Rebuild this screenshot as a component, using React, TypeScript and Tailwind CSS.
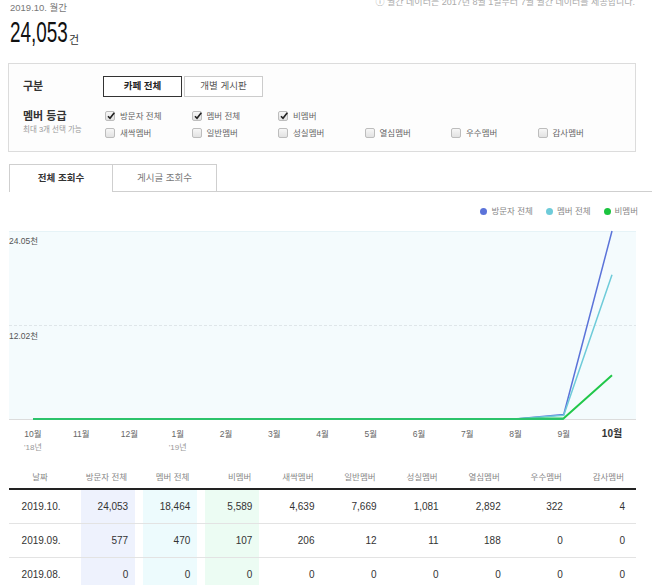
import React from 'react'

const FONT = { fontFamily: '"Liberation Sans", "Noto Sans CJK KR", sans-serif' }

const GRADES: { label: string; checked: boolean }[] = [
  { label: '방문자 전체', checked: true },
  { label: '멤버 전체', checked: true },
  { label: '비멤버', checked: true },
  { label: '', checked: false },
  { label: '', checked: false },
  { label: '', checked: false },
  { label: '새싹멤버', checked: false },
  { label: '일반멤버', checked: false },
  { label: '성실멤버', checked: false },
  { label: '열심멤버', checked: false },
  { label: '우수멤버', checked: false },
  { label: '감사멤버', checked: false },
]

const HEADERS = ['방문자 전체', '멤버 전체', '비멤버', '새싹멤버', '일반멤버', '성실멤버', '열심멤버', '우수멤버', '감사멤버']

const ROWS = [
  { date: '2019.10.', values: ['24,053', '18,464', '5,589', '4,639', '7,669', '1,081', '2,892', '322', '4'] },
  { date: '2019.09.', values: ['577', '470', '107', '206', '12', '11', '188', '0', '0'] },
  { date: '2019.08.', values: ['0', '0', '0', '0', '0', '0', '0', '0', '0'] },
]

const BANDS = ['bg-[#eef2fd]', 'bg-[#edfbfd]', 'bg-[#ecfcf3]']

const MONTHS = ['10월', '11월', '12월', '1월', '2월', '3월', '4월', '5월', '6월', '7월', '8월', '9월', '10월']

const SERIES = [
  { color: '#5b73d9', last: [577, 24053] },
  { color: '#6ecbd9', last: [470, 18464] },
  { color: '#21c74a', last: [107, 5589] },
]

function px(i: number) {
  return 24 + i * 48.25
}
function py(v: number) {
  return 194 - (v / 24053) * 188
}

function Checkbox({ checked }: { checked: boolean }) {
  return (
    <span className="relative inline-block w-[10px] h-[10px] border border-[#bdbdbd] rounded-[2px] bg-gradient-to-b from-[#f7f7f7] to-[#e2e2e2] shrink-0">
      {checked && (
        <svg viewBox="0 0 10 10" className="absolute left-[0px] top-[-1px] w-[10px] h-[10px]">
          <path d="M2 5.2 L4 7.3 L8.3 1.8" fill="none" stroke="#222" strokeWidth="1.6" />
        </svg>
      )}
    </span>
  )
}

function Chart() {
  const basePts = Array.from({ length: 12 }, (_, i) => `${px(i)},194`)
  return (
    <svg width="627" height="230" className="block">
      <rect x="0" y="6" width="627" height="188" fill="#f4fbfd" />
      <line x1="0" y1="6.5" x2="627" y2="6.5" stroke="#e6f3f7" />
      <line x1="0" y1="100.5" x2="627" y2="100.5" stroke="#dfe6e9" strokeDasharray="3 2" />
      <line x1="0" y1="194.5" x2="627" y2="194.5" stroke="#dcdcdc" />
      <text x="0" y="19" fontSize="8.5" fill="#555">24.05천</text>
      <text x="0" y="114" fontSize="8.5" fill="#555">12.02천</text>
      {SERIES.map((s, idx) => (
        <polyline
          key={idx}
          fill="none"
          stroke={s.color}
          strokeWidth={idx === 2 ? 2 : 1.5}
          points={[...basePts.slice(0, 11), `${px(11)},${py(s.last[0])}`, `${px(12)},${py(s.last[1])}`].join(' ')}
        />
      ))}
      <polyline fill="none" stroke="#2cc36b" strokeWidth="2" points={basePts.slice(0, 12).join(' ')} />
      {MONTHS.map((m, i) => (
        <text
          key={i}
          x={px(i)}
          y="212"
          fontSize={i === 12 ? 10 : 8.5}
          fontWeight={i === 12 ? 700 : 400}
          fill={i === 12 ? '#333' : '#666'}
          textAnchor="middle"
        >
          {m}
        </text>
      ))}
      <text x={px(0)} y="225" fontSize="8" fill="#999" textAnchor="middle">'18년</text>
      <text x={px(3)} y="225" fontSize="8" fill="#999" textAnchor="middle">'19년</text>
    </svg>
  )
}

export default function App() {
  return (
    <div className="w-[652px] h-[585px] overflow-hidden bg-white text-[#333]" style={FONT}>
      <div className="relative h-[63px] px-[10px]">
        <div className="absolute right-[17px] top-[-4px] text-[9px] text-[#aaa] leading-[12px]">
          ⓘ 월간 데이터는 2017년 8월 1일부터 7월 월간 데이터를 제공합니다.
        </div>
        <div className="pt-[1px] text-[9.5px] text-[#777] leading-[14px]">2019.10. 월간</div>
        <div className="flex items-end mt-[3px]">
          <span className="inline-block text-[30px] leading-[28px] text-[#111] origin-left scale-x-[0.63] w-[58px] whitespace-nowrap">
            24,053
          </span>
          <span className="ml-[1px] text-[11px] text-[#333] leading-[12px]">건</span>
        </div>
      </div>

      <div className="ml-[8px] w-[628px] h-[89px] border border-[#dcdcdc] bg-[#fdfdfd] pt-[12px]">
        <div className="flex items-center h-[21px]">
          <div className="w-[94px] pl-[14px] text-[11px] font-bold text-[#333]">구분</div>
          <button className="w-[79px] h-[21px] border border-[#333] bg-white text-[9.5px] font-bold text-[#222]">카페 전체</button>
          <button className="w-[79px] h-[21px] ml-[2px] border border-[#ccc] bg-white text-[9.5px] text-[#555]">개별 게시판</button>
        </div>
        <div className="flex mt-[12px]">
          <div className="w-[96px] pl-[14px]">
            <div className="text-[11px] font-bold text-[#333] leading-[14px]">멤버 등급</div>
            <div className="text-[7.5px] text-[#999] leading-[12px] mt-[1px]">최대 3개 선택 가능</div>
          </div>
          <div className="grid grid-cols-[repeat(6,86.5px)] gap-y-[5px] pt-[1px]">
            {GRADES.map((g, i) =>
              g.label ? (
                <div key={i} className="flex items-center gap-[5px] h-[12px]">
                  <Checkbox checked={g.checked} />
                  <span className="text-[8.5px] text-[#666] whitespace-nowrap">{g.label}</span>
                </div>
              ) : (
                <div key={i} className="h-[12px]" />
              )
            )}
          </div>
        </div>
      </div>

      <div className="flex mt-[12px] ml-[9px] h-[28px]">
        <div className="w-[104px] border border-b-0 border-[#cfcfcf] bg-white flex items-center justify-center text-[9.5px] font-bold text-[#333]">
          전체 조회수
        </div>
        <div className="w-[104px] border border-l-0 border-[#cfcfcf] bg-white flex items-center justify-center text-[9.5px] text-[#777]">
          게시글 조회수
        </div>
        <div className="flex-1 border-b border-[#cfcfcf]" />
      </div>

      <div className="flex justify-end items-center gap-[13px] h-[14px] mt-[12px] pr-[14px] text-[8.5px] text-[#888]">
        <span className="flex items-center gap-[4px]"><span className="w-[7px] h-[7px] rounded-full bg-[#5b73d9]" />방문자 전체</span>
        <span className="flex items-center gap-[4px]"><span className="w-[7px] h-[7px] rounded-full bg-[#6ecbd9]" />멤버 전체</span>
        <span className="flex items-center gap-[4px]"><span className="w-[7px] h-[7px] rounded-full bg-[#1bc43f]" />비멤버</span>
      </div>

      <div className="ml-[9px] mt-[7px]">
        <Chart />
      </div>

      <table className="ml-[9px] mt-[12px] w-[627px] border-collapse table-fixed">
        <colgroup>
          <col className="w-[68px]" />
          {HEADERS.map((h) => (
            <col key={h} className="w-[62px]" />
          ))}
        </colgroup>
        <thead>
          <tr className="h-[22px] border-b-2 border-[#222]">
            <th className="text-center text-[8.5px] font-normal text-[#888] pr-[6px]">날짜</th>
            {HEADERS.map((h) => (
              <th key={h} className="text-right pr-[12px] text-[8.5px] font-normal text-[#888] whitespace-nowrap">{h}</th>
            ))}
          </tr>
        </thead>
        <tbody>
          {ROWS.map((r) => (
            <tr key={r.date} className="border-b border-[#e3e3e3]">
              <td className="p-0 h-[33px] text-center text-[10px] text-[#333] pr-[4px]">{r.date}</td>
              {r.values.map((v, i) => (
                <td key={i} className="p-0 h-[33px]">
                  <div className={`mx-[4px] h-[33px] flex items-center justify-end pr-[7px] text-[10px] text-[#333] ${i < 3 ? BANDS[i] : ''}`}>
                    {v}
                  </div>
                </td>
              ))}
            </tr>
          ))}
        </tbody>
      </table>
    </div>
  )
}
